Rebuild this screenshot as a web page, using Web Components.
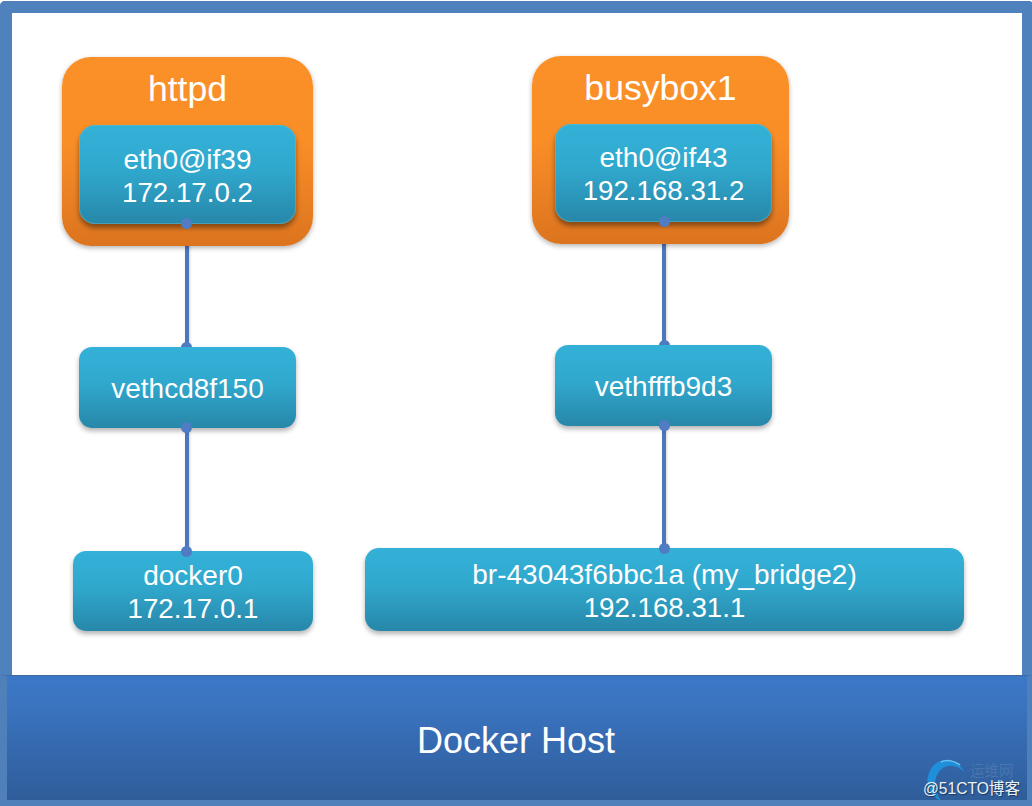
<!DOCTYPE html>
<html><head><meta charset="utf-8"><style>
html,body{margin:0;padding:0;background:#fff}
body{width:1032px;height:806px;overflow:hidden;font-family:"Liberation Sans",Arial,sans-serif}
</style></head><body>
<docker-host-diagram>
  <net-link x="186.5" y1="224" y2="347" cap></net-link>
  <net-link x="186.5" y1="426" y2="551"></net-link>
  <net-link x="664" y1="222" y2="345" cap></net-link>
  <net-link x="664" y1="426" y2="549"></net-link>
  <net-container x="62" y="57" w="251" h="189" label="httpd"></net-container>
  <net-container x="532" y="56" w="257" h="188" label="busybox1"></net-container>
  <net-box x="79" y="125" w="217" h="99" r="16" cx="107.5" inner dots="b"><div>eth0@if39</div><div>172.17.0.2</div></net-box>
  <net-box x="555" y="124" w="217" h="98" r="16" cx="109" inner dots="b"><div>eth0@if43</div><div>192.168.31.2</div></net-box>
  <net-box x="79" y="347" w="217" h="81" r="13" cx="107.5" dots="b"><div>vethcd8f150</div></net-box>
  <net-box x="555" y="345" w="217" h="81" r="13" cx="109" dots="b"><div>vethfffb9d3</div></net-box>
  <net-box x="73" y="551" w="240" h="80" r="13" cx="113.5" dots="t"><div>docker0</div><div>172.17.0.1</div></net-box>
  <net-box x="365" y="548" w="599" h="83" r="14" cx="299" dots="t"><div>br-43043f6bbc1a (my_bridge2)</div><div>192.168.31.1</div></net-box>
  <host-bar slot="bar">Docker Host</host-bar>
</docker-host-diagram>
<script>
class DockerHostDiagram extends HTMLElement{constructor(){super();this.attachShadow({mode:'open'}).innerHTML=`<style>
:host{display:flex;flex-direction:column;width:1032px;height:806px;box-sizing:border-box;padding-top:1px;background:#fff;position:relative}
.frame{flex:0 0 674px;box-sizing:border-box;border:solid #4f81bd;border-width:12px 10px 0 12px;border-top-left-radius:5px;border-top-right-radius:3px}
</style><div class="frame"></div><slot name="bar"></slot><slot></slot>`}}
class NetLink extends HTMLElement{constructor(){super();const x=+this.getAttribute('x'),a=+this.getAttribute('y1'),b=+this.getAttribute('y2'),c=this.hasAttribute('cap');
this.attachShadow({mode:'open'}).innerHTML=`<style>:host{position:absolute;left:${x-2}px;top:${a}px;width:4px;height:${b-a}px;background:#4b78bc;box-shadow:1px 2px 3px rgba(0,0,0,.16)}
i{position:absolute;left:-3.5px;bottom:-5.5px;width:11px;height:11px;border-radius:50%;background:#4f7cc2}</style>${c?'<i></i>':''}`}}
class NetContainer extends HTMLElement{constructor(){super();const g=n=>this.getAttribute(n);
this.attachShadow({mode:'open'}).innerHTML=`<style>:host{position:absolute;left:${g('x')}px;top:${g('y')}px;width:${g('w')}px;height:${g('h')}px;box-sizing:border-box;border-radius:29px;background:linear-gradient(#fb9028 0%,#f98e27 45%,#dc741f 100%);box-shadow:0 2px 5px rgba(0,0,0,.3);color:#fff;font-size:35.6px;text-align:center;padding-top:12px;line-height:40px}</style>${g('label')}`}}
class NetBox extends HTMLElement{constructor(){super();const g=n=>this.getAttribute(n);const d=g('dots')||'';const cx=+g('cx');const inner=this.hasAttribute('inner');
this.attachShadow({mode:'open'}).innerHTML=`<style>:host{position:absolute;left:${g('x')}px;top:${g('y')}px;width:${g('w')}px;height:${g('h')}px;box-sizing:border-box;border-radius:${g('r')}px;background:linear-gradient(#34b1d8 0%,#30a8cd 45%,#2787a9 100%);box-shadow:${inner?'inset 0 0 0 1px rgba(110,190,195,.45),0 4px 5px rgba(0,0,0,.4)':'0 3px 5px rgba(0,0,0,.3)'};color:#fff;font-size:28px;line-height:33px;display:flex;flex-direction:column;align-items:center;justify-content:center;padding-top:2px}
::slotted(div:nth-child(2)){font-size:27.7px}
.dot{position:absolute;left:${cx-5.5}px;width:11px;height:11px;border-radius:50%;background:#4f7cc2}
.t{top:-5px}.b{bottom:-5px}</style><slot></slot>${d.includes('t')?'<i class="dot t"></i>':''}${d.includes('b')?'<i class="dot b"></i>':''}`}}
class HostBar extends HTMLElement{constructor(){super();this.attachShadow({mode:'open'}).innerHTML=`<style>
:host{display:flex;flex:1;box-sizing:border-box;align-items:center;justify-content:center;position:relative;color:#fff;font-size:36px;background:linear-gradient(#3c78c8 0%,#3a73bf 25%,#2f5d9a 100%);border:solid #4f80ba;border-width:1px 5px 6px 7px;border-top-color:#44699d}
.t{position:relative;top:3px;left:-1px}
.mark{position:absolute;right:-6px;bottom:-6px;width:110px;height:52px}
.mark svg{position:absolute;left:0;top:0}
.a{position:absolute;left:47px;top:9px;font:14.5px/16px "Liberation Sans","Noto Sans CJK SC",sans-serif;color:#4a76ad}
.b{position:absolute;left:0;top:26px;font:15.6px/18px "Liberation Sans","Noto Sans CJK SC",sans-serif;color:#eef2f6;white-space:nowrap;text-shadow:1px 1px 1px rgba(20,40,70,.7)}
</style><span class="t"><slot></slot></span><div class="mark"><svg width="110" height="52" fill="none"><path d="M42 19C36 6 20 1 10 12C0 24 4 41 18 47C12 38 10 27 15 19C22 9 34 10 42 19Z" fill="#1f8fdc"/><path d="M37 11C32 7 24 5 18 8" stroke="#6cc0ee" stroke-width="1.5"/></svg><span class="a">运维网</span><span class="b">@51CTO博客</span></div>`}}
customElements.define('docker-host-diagram',DockerHostDiagram);
customElements.define('net-link',NetLink);
customElements.define('net-container',NetContainer);
customElements.define('net-box',NetBox);
customElements.define('host-bar',HostBar);
</script>
</body></html>
